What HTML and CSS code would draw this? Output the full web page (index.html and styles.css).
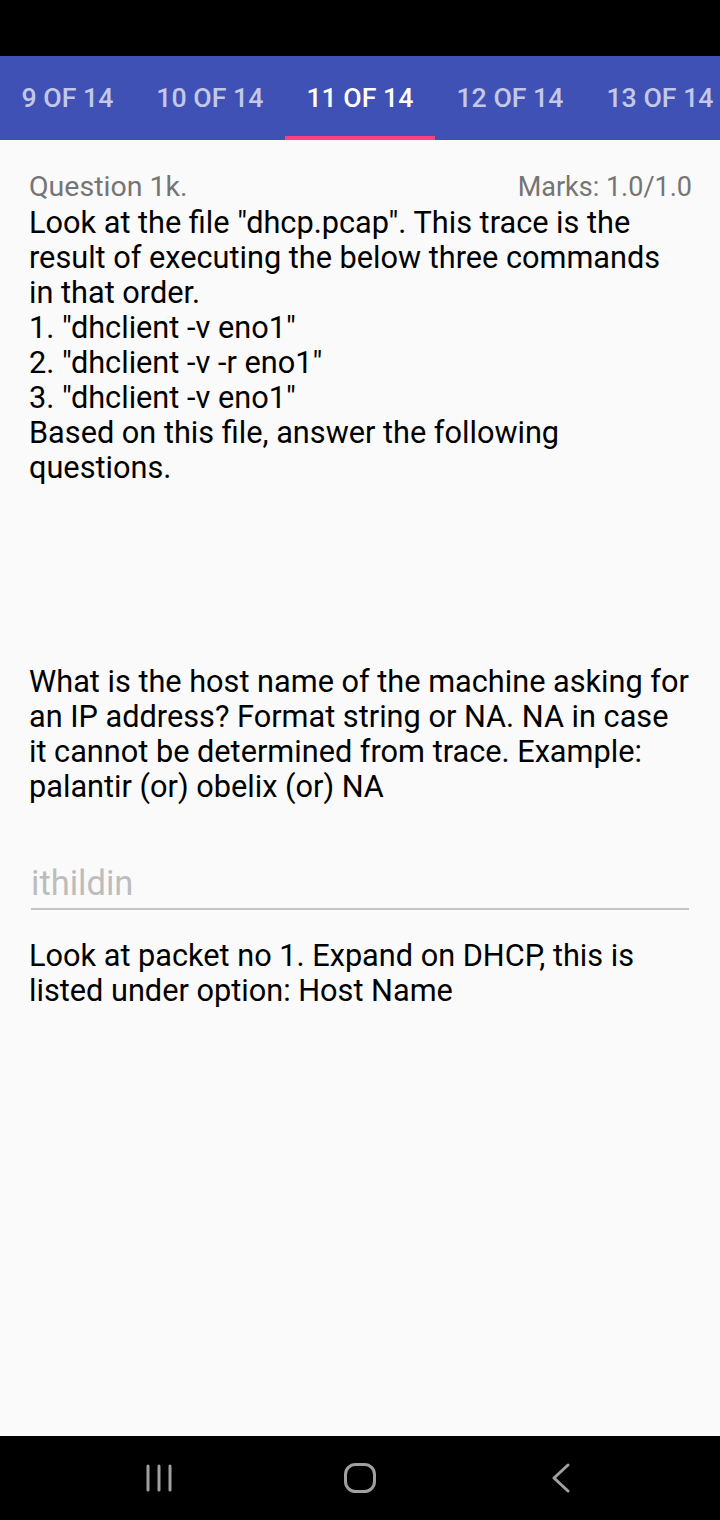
FILE: index.html
```html
<!DOCTYPE html>
<html>
<head>
<meta charset="utf-8">
<link rel="stylesheet" href="styles.css">
</head>
<body>
<div class="screen">
  <div class="status-bar"></div>
  <div class="tab-bar">
    <div class="tab">9 OF 14</div>
    <div class="tab">10 OF 14</div>
    <div class="tab active">11 OF 14</div>
    <div class="tab">12 OF 14</div>
    <div class="tab">13 OF 14</div>
  </div>
  <main class="content">
    <div class="q-header">
      <span class="q-label">Question 1k.</span>
      <span class="q-marks">Marks: 1.0/1.0</span>
    </div>
    <p class="q-text">Look at the file "dhcp.pcap". This trace is the result of executing the below three commands in that order.<br>1. "dhclient -v eno1"<br>2. "dhclient -v -r eno1"<br>3. "dhclient -v eno1"<br>Based on this file, answer the following questions.</p>
    <div class="spacer"></div>
    <p class="q-text">What is the host name of the machine asking for an IP address? Format string or NA. NA in case it cannot be determined from trace. Example: palantir (or) obelix (or) NA</p>
    <div class="answer">ithildin</div>
    <p class="q-text hint">Look at packet no 1. Expand on DHCP, this is listed under option: Host Name</p>
  </main>
  <nav class="nav-bar">
    <svg class="nav-icon" width="28" height="30" viewBox="0 0 28 30">
      <g stroke="#a0a0a0" stroke-width="3" stroke-linecap="round">
        <line x1="3" y1="3" x2="3" y2="27"/>
        <line x1="14" y1="3" x2="14" y2="27"/>
        <line x1="25" y1="3" x2="25" y2="27"/>
      </g>
    </svg>
    <svg class="nav-icon" width="32" height="30" viewBox="0 0 32 30">
      <rect x="1.5" y="1.5" width="29" height="27" rx="10" ry="10" fill="none" stroke="#a0a0a0" stroke-width="3"/>
    </svg>
    <svg class="nav-icon" width="18" height="30" viewBox="0 0 18 30">
      <polyline points="16,2 2,15 16,28" fill="none" stroke="#a0a0a0" stroke-width="3" stroke-linecap="round" stroke-linejoin="round"/>
    </svg>
  </nav>
</div>
</body>
</html>
```
FILE: styles.css
```css
html, body {
  margin: 0;
  padding: 0;
}
body {
  width: 720px;
  height: 1520px;
  overflow: hidden;
  font-family: Roboto, "Noto Sans", sans-serif;
  background: #fafafa;
}
.screen {
  display: flex;
  flex-direction: column;
  width: 720px;
  height: 1520px;
}
.status-bar {
  height: 56px;
  background: #000;
  flex-shrink: 0;
}
.tab-bar {
  height: 84px;
  flex-shrink: 0;
  background: #3f51b5;
  display: flex;
  overflow: hidden;
}
.tab {
  flex-shrink: 0;
  padding: 4px 21.5px 0 21.5px;
  display: flex;
  align-items: center;
  justify-content: center;
  font-size: 26.7px;
  font-weight: 500;
  color: rgba(255, 255, 255, 0.7);
  white-space: nowrap;
  box-sizing: border-box;
  border-bottom: 4px solid transparent;
}
.tab.active {
  color: #fff;
  border-bottom-color: #ff4081;
}
.content {
  flex: 1;
  padding: 29px 29px 0 29px;
  background: #fafafa;
}
.q-header {
  display: flex;
  justify-content: space-between;
  align-items: baseline;
  font-size: 28.5px;
  line-height: 35px;
  color: #757575;
}
.q-marks {
  font-size: 27px;
  margin-right: -1px;
}
.q-text {
  margin: 0;
  font-size: 30.7px;
  line-height: 35px;
  color: #000;
}
.spacer {
  height: 179px;
}
.answer {
  margin: 59px 2px 0 2px;
  padding-bottom: 5px;
  font-size: 34.5px;
  line-height: 40px;
  color: #bdbdbd;
  border-bottom: 2px solid #c4c4c4;
}
.hint {
  margin-top: 28px;
}
.nav-bar {
  height: 84px;
  flex-shrink: 0;
  background: #000;
  display: grid;
  grid-template-columns: repeat(3, 201px);
  justify-content: center;
  justify-items: center;
  align-items: center;
}
.nav-icon {
  display: block;
}
```
